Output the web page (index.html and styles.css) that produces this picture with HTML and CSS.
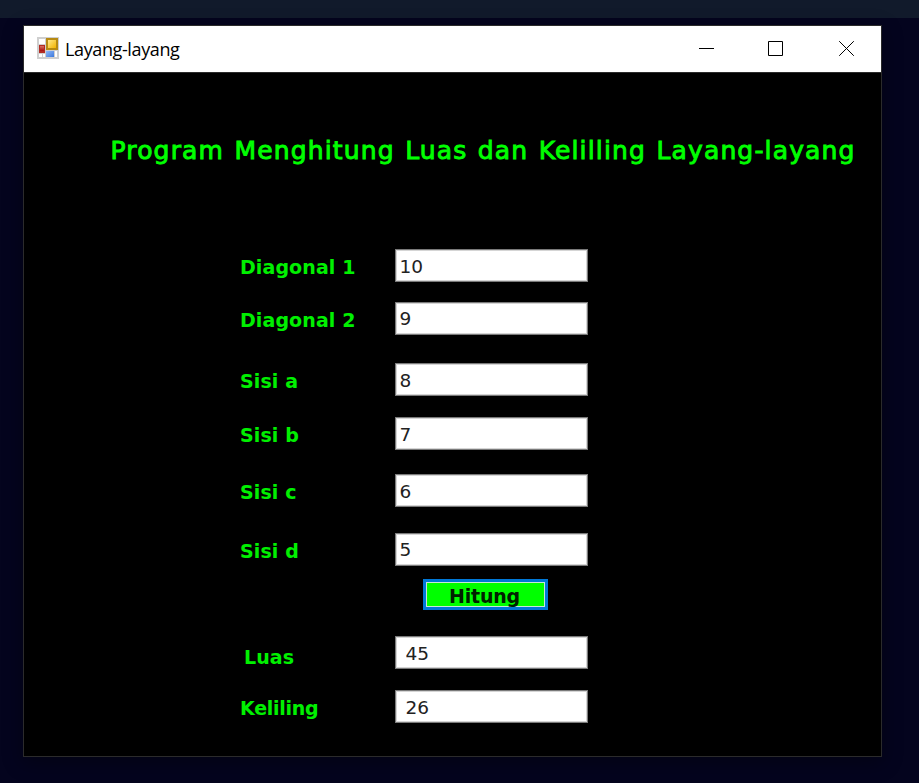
FILE: index.html
```html
<!DOCTYPE html>
<html lang="id">
<head>
<meta charset="utf-8">
<title>Layang-layang</title>
<link rel="stylesheet" href="styles.css">
</head>
<body>
<div class="strip"></div>
<main class="window">
  <header class="titlebar">
    <svg class="app-icon" viewBox="0 0 22 22" width="22" height="22">
      <defs>
        <linearGradient id="gold" x1="0" y1="0" x2="1" y2="1"><stop offset="0" stop-color="#ffe98a"/><stop offset="1" stop-color="#f3b400"/></linearGradient>
        <linearGradient id="red" x1="0" y1="0" x2="0" y2="1"><stop offset="0" stop-color="#d9705f"/><stop offset="1" stop-color="#a80d0d"/></linearGradient>
        <linearGradient id="blue" x1="0" y1="0" x2="1" y2="1"><stop offset="0" stop-color="#8fb8f8"/><stop offset="1" stop-color="#3c78dc"/></linearGradient>
      </defs>
      <rect width="22" height="22" fill="#cfcfcf"/>
      <path d="M2 2h6v5H2zM2 17h3v3H2zM6 17h2v3H6zM18 14h2v6h-2z" fill="#fff"/>
      <rect x="9" y="1" width="12" height="12" fill="#b78a13"/>
      <rect x="11" y="3" width="8" height="8" fill="url(#gold)"/>
      <rect x="2" y="8" width="6" height="8" fill="#b32a22"/>
      <rect x="3" y="9" width="4" height="5" fill="url(#red)"/>
      <rect x="9" y="14" width="8" height="6" fill="url(#blue)"/>
    </svg>
    <span class="caption">Layang-layang</span>
    <div class="controls">
      <svg width="15" height="15" viewBox="0 0 15 15"><path d="M0 7.5h15" stroke="#000"/></svg>
      <svg width="15" height="15" viewBox="0 0 15 15"><path d="M.5.5h14v14H.5z" fill="none" stroke="#000"/></svg>
      <svg width="15" height="15" viewBox="0 0 15 15"><path d="M.2.2l14.6 14.6M14.8.2L.2 14.8" stroke="#000" stroke-width="1"/></svg>
    </div>
  </header>
  <h1 class="heading">Program Menghitung Luas dan Kelilling Layang-layang</h1>
  <form class="form">
    <label class="row"><span class="label">Diagonal 1</span><input class="field" value="10"></label>
    <label class="row gap-a"><span class="label">Diagonal 2</span><input class="field" value="9"></label>
    <label class="row gap-b"><span class="label">Sisi a</span><input class="field" value="8"></label>
    <label class="row gap-c"><span class="label">Sisi b</span><input class="field" value="7"></label>
    <label class="row gap-d"><span class="label">Sisi c</span><input class="field" value="6"></label>
    <label class="row gap-e"><span class="label">Sisi d</span><input class="field" value="5"></label>
    <button class="submit" type="button">Hitung</button>
    <label class="row gap-f"><span class="label luas">Luas</span><input class="field result" value="45"></label>
    <label class="row gap-c"><span class="label keliling">Keliling</span><input class="field result" value="26"></label>
  </form>
</main>
</body>
</html>
```

FILE: styles.css
```css
* { box-sizing: border-box; }
body {
  margin: 0;
  height: 783px;
  overflow: hidden;
  background: #04041e;
  font-family: "DejaVu Sans", Verdana, sans-serif;
}
.strip { height: 18px; background: #111a2b; }
.window {
  width: 859px;
  height: 732px;
  margin: 7px 0 0 23px;
  border: 1px solid #2b2b2b;
  background: #000;
  box-shadow: 0 5px 18px rgba(0, 0, 0, .35);
}
.titlebar {
  display: flex;
  align-items: center;
  height: 47px;
  padding: 0 27px 1px 13px;
  background: #fff;
  border-bottom: 1px solid #2b2b2b;
}
.app-icon { margin-bottom: 1px; }
.caption {
  margin: 0 0 0 6px;
  font: 18px/24px "Open Sans", "Noto Sans", sans-serif;
  letter-spacing: -.38px;
  color: #000;
}
.controls { display: flex; gap: 54px; margin-left: auto; }
.controls svg:last-child { margin-left: 2px; }
.heading {
  margin: 62px 0 0 86.5px;
  font-size: 25px;
  line-height: 32px;
  font-weight: 400;
  letter-spacing: 1.15px;
  word-spacing: 1.3px;
  white-space: nowrap;
  color: #0f0;
  -webkit-text-stroke: .9px #0f0;
}
.form { margin: 82px 0 0 215px; }
.row { display: flex; height: 33px; }
.label {
  width: 155.5px;
  padding: 6px 0 0 1px;
  font-size: 19px;
  font-weight: 700;
  line-height: 24px;
  letter-spacing: .1px;
  white-space: nowrap;
  color: #00f000;
}
.luas { padding: 9px 0 0 5px; }
.keliling { letter-spacing: -.25px; }
.field {
  width: 193px;
  height: 33px;
  padding: 1px 0 0 4px;
  border: 1px solid #7a7a7a;
  border-radius: 0;
  outline: 0;
  background: #fff;
  box-shadow: inset 0 0 0 1px #d5d5d5;
  color: #222;
  font: 18.5px/30px "DejaVu Sans", Verdana, sans-serif;
}
.result { padding-left: 10px; }
.gap-a { margin-top: 19.5px; }
.gap-b { margin-top: 28.5px; }
.gap-c { margin-top: 21px; }
.gap-d { margin-top: 24px; }
.gap-e { margin-top: 25.5px; }
.gap-f { margin-top: 26px; }
.submit {
  display: block;
  width: 125px;
  height: 31px;
  margin: 13.5px 0 0 184px;
  padding: 2px 2px 0 0;
  border: 3px solid #0078d7;
  border-radius: 0;
  background: #0f0;
  box-shadow: inset 0 0 0 1px #c8e6d8;
  color: #002000;
  font: 700 19px/20px "DejaVu Sans", Verdana, sans-serif;
  letter-spacing: -.2px;
}
```
